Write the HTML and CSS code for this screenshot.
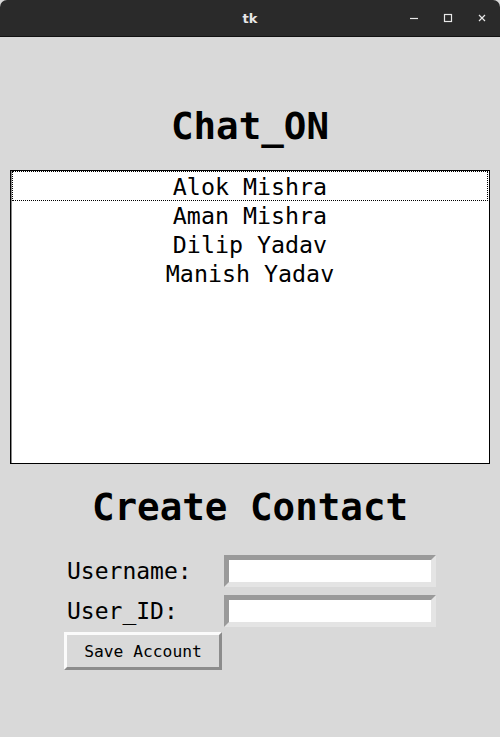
FILE: index.html
```html
<!DOCTYPE html>
<html>
<head>
<meta charset="utf-8">
<title>tk</title>
<link rel="stylesheet" href="styles.css">
</head>
<body>
<div class="window">
  <header class="titlebar">
    <span class="title">tk</span>
    <div class="controls">
      <svg class="ctl" width="12" height="12" viewBox="0 0 12 12"><path d="M2 6.5h8" stroke="#e8e8e8" stroke-width="1.2"/></svg>
      <svg class="ctl" width="12" height="12" viewBox="0 0 12 12"><rect x="2.5" y="2.5" width="7" height="7" fill="none" stroke="#e8e8e8" stroke-width="1.2"/></svg>
      <svg class="ctl" width="12" height="12" viewBox="0 0 12 12"><path d="M3 3l6 6M9 3l-6 6" stroke="#e8e8e8" stroke-width="1.2"/></svg>
    </div>
  </header>
  <main class="content">
    <h1 class="heading">Chat_ON</h1>
    <div class="listbox">
      <div class="row selected">Alok Mishra</div>
      <div class="row">Aman Mishra</div>
      <div class="row">Dilip Yadav</div>
      <div class="row">Manish Yadav</div>
    </div>
    <h2 class="heading sub">Create Contact</h2>
    <div class="form">
      <label class="label">Username:</label>
      <div class="entry"></div>
      <label class="label">User_ID:</label>
      <div class="entry"></div>
    </div>
    <div class="actions">
      <button class="btn">Save Account</button>
    </div>
  </main>
</div>
</body>
</html>
```
FILE: styles.css
```css
html, body {
  margin: 0;
  padding: 0;
  background: #d9d9d9;
}
.window {
  width: 500px;
  height: 737px;
  background: #d9d9d9;
  font-family: "DejaVu Sans Mono", monospace;
  color: #000;
}
.titlebar {
  height: 36px;
  background: #2a2a2a;
  border-bottom: 1px solid #121212;
  border-radius: 7px 7px 0 0;
  position: relative;
  display: flex;
  align-items: center;
  justify-content: center;
}
.title {
  font-family: "DejaVu Sans", sans-serif;
  font-weight: bold;
  font-size: 13px;
  color: #e6e6e6;
}
.controls {
  position: absolute;
  right: 12px;
  top: 12px;
  display: flex;
  gap: 22px;
}
.ctl { display: block; }
.content {
  padding-top: 69px;
}
.heading {
  margin: 0;
  height: 40px;
  line-height: 40px;
  font-size: 37.5px;
  font-weight: bold;
  text-align: center;
}
.listbox {
  margin: 24px 10px 0 10px;
  height: 294px;
  box-sizing: border-box;
  background: #fff;
  border: 1px solid #000;
  box-shadow: inset 1px 0 0 #8a8a8a;
  padding: 0 1px;
}
.row {
  height: 29px;
  box-sizing: border-box;
  padding-top: 4px;
  line-height: 23px;
  font-size: 23.3px;
  text-align: center;
  white-space: pre;
}
.row.selected {
  height: 30px;
  margin-bottom: -1px;
  outline: 1px dotted #000;
  outline-offset: -1px;
}
.sub {
  margin-top: 23px;
}
.form {
  margin-top: 28px;
  padding-left: 66px;
  display: grid;
  grid-template-columns: 158px 212px;
  row-gap: 8px;
  align-items: center;
}
.label {
  font-size: 23px;
  line-height: 32px;
  padding-left: 1px;
}
.entry {
  height: 32px;
  box-sizing: border-box;
  background: #fff;
  border: 5px solid;
  border-color: #9a9a9a #e4e4e4 #e4e4e4 #9a9a9a;
}
.actions {
  padding-left: 64px;
  margin-top: 5px;
}
.btn {
  width: 158px;
  height: 38px;
  box-sizing: border-box;
  background: #d9d9d9;
  border: 3px solid;
  border-color: #fbfbfb #8c8c8c #8c8c8c #fbfbfb;
  font-family: "DejaVu Sans Mono", monospace;
  font-size: 16.3px;
  color: #000;
  padding: 0;
  margin: 0;
}
```
